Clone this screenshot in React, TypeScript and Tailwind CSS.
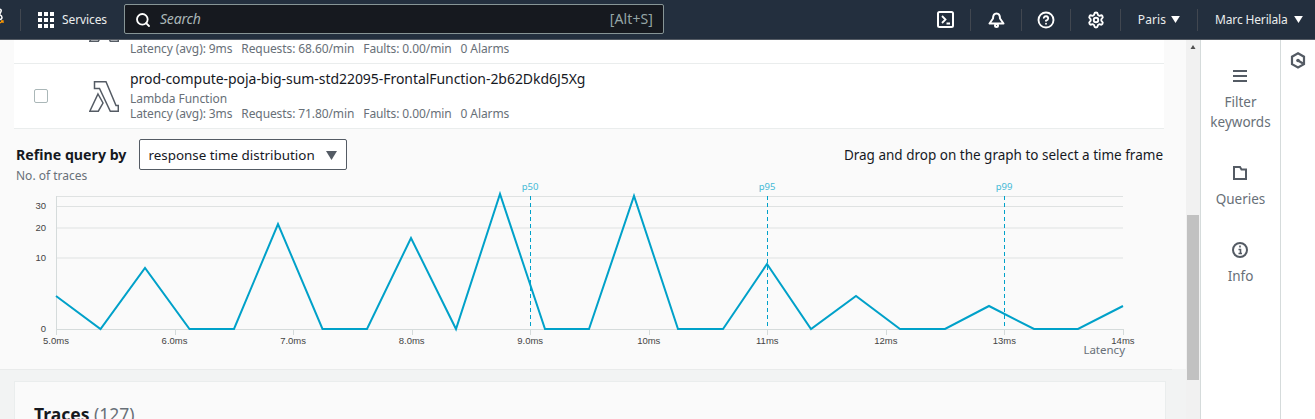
import { CircleHelp, Search, Settings } from "lucide-react";

const points = [
  [56, 296], [100.5, 329], [145, 268], [189.5, 329], [234, 329], [278, 224], [322.5, 329], [367, 329],
  [411, 238], [456, 329], [500, 194], [545, 329], [589, 329], [634, 196], [678, 329], [723, 329],
  [767, 264], [811, 329], [856, 296], [900, 329], [945, 329], [989, 306], [1034, 329], [1078, 329], [1123, 306],
];

const xTicks = ["5.0ms", "6.0ms", "7.0ms", "8.0ms", "9.0ms", "10ms", "11ms", "12ms", "13ms", "14ms"];
const yTicks = [["30", 206], ["20", 228], ["10", 258], ["0", 329]] as const;
const markers = [["p50", 530], ["p95", 767], ["p99", 1004]] as const;

const Caret = ({ className }: { className: string }) => (
  <svg viewBox="0 0 10 8" className={className} fill="currentColor">
    <path d="M0 0h10L5 8z" />
  </svg>
);

const NavIcon = ({ width, children }: { width: string; children: React.ReactNode }) => (
  <div className={`h-[22px] border-r border-[#414750] flex items-center justify-center ${width}`}>{children}</div>
);

const TopBar = () => (
  <header className="h-10 shrink-0 bg-[#232f3e] border-b border-[#545b64] flex items-center text-[#eaeded] text-xs">
    <div className="w-[21px] h-[22px] border-r border-[#414750] relative">
      <svg viewBox="0 0 4 18" className="absolute left-0 top-[-1px] w-1 h-[18px]" fill="none">
        <path d="M-2 1q4 0 3 2.500t-2 3q3 1 3 3t-3 2" stroke="#ffffff" strokeWidth="1.500" />
        <path d="M-2 15q3 0 4-1.500M1 13h2v2" stroke="#f90" strokeWidth="1.300" />
      </svg>
    </div>
    <div className="flex items-center gap-2 ml-[17px] w-[86px]">
      <svg viewBox="0 0 16 16" className="w-4 h-4" fill="white">
        <path d="M0 0h4v4H0zM6 0h4v4H6zM12 0h4v4h-4zM0 6h4v4H0zM6 6h4v4H6zM12 6h4v4h-4zM0 12h4v4H0zM6 12h4v4h-4zM12 12h4v4h-4z" />
      </svg>
      <span className="tracking-[-0.1px]">Services</span>
    </div>
    <div className="w-[540px] h-[30px] -mt-[2px] pt-[2px] bg-[#16191f] border border-[#879596] rounded-[2px] flex items-center pl-[10px] pr-[10px] text-[14px]">
      <Search size={16} strokeWidth={2.75} className="text-white" />
      <span className="ml-[9px] italic text-[#aab7b8] tracking-[-0.2px]">Search</span>
      <span className="ml-auto text-[#95a5a6] tracking-[0.1px]">[Alt+S]</span>
    </div>
    <div className="ml-auto flex items-center">
      <NavIcon width="w-[50px]">
        <svg viewBox="0 0 17 17" className="w-[17px] h-[17px]" fill="none" stroke="white">
          <rect x="1" y="1" width="15" height="15" rx="1.500" strokeWidth="2" />
          <path d="M5 5l3.500 3.500L5 12M9.500 12.500H13" strokeWidth="1.800" />
        </svg>
      </NavIcon>
      <NavIcon width="w-[51px]">
        <svg viewBox="0 0 17 16" className="w-[17px] h-4" fill="none" stroke="white" strokeWidth="2">
          <path d="M1.500 11.500h14L12 6.500c0-2.500-1-5-3.500-5S5 4 5 6.500z" strokeLinejoin="round" />
          <circle cx="8.500" cy="13.500" r="1.500" />
        </svg>
      </NavIcon>
      <NavIcon width="w-[49px]">
        <CircleHelp size={18} strokeWidth={2.5} className="text-white" />
      </NavIcon>
      <NavIcon width="w-[50px]">
        <Settings size={18} strokeWidth={2.5} className="text-white" />
      </NavIcon>
      <NavIcon width="w-[77px]">
        <span className="tracking-[0.1px]">Paris</span>
        <Caret className="w-[9px] h-[7px] ml-[5px] text-white" />
      </NavIcon>
      <div className="w-[117px] pl-[17px] flex items-center">
        <span className="tracking-[-0.15px]">Marc Herilala</span>
        <Caret className="w-[9px] h-[7px] ml-[6px] text-white" />
      </div>
    </div>
  </header>
);

const Stats = ({ stats }: { stats: string[] }) => (
  <div className="flex gap-[9px] text-xs tracking-[-0.1px] text-[#687078]">
    {stats.map((s) => (
      <span key={s}>{s}</span>
    ))}
  </div>
);

const LambdaIcon = () => (
  <svg viewBox="0 0 30 31" className="w-[30px] h-[31px]" fill="none" stroke="#545b64" strokeWidth="1.500">
    <path d="M5.500 .8H17L27 24.500h2.300v5.700h-8L10.500 7.500h-5zM9 13l5 9-4.700 8.200H.8z" />
  </svg>
);

const Chart = () => (
  <svg width="1172" height="187" viewBox="0 182 1172 187" className="block overflow-visible">
    {[196.5, 206.5, 228, 258].map((y) => (
      <line key={y} x1="56" x2="1123" y1={y} y2={y} stroke="#dfe2e2" strokeWidth="1" />
    ))}
    <line x1="56.500" x2="56.500" y1="196" y2="329" stroke="#d5dbdb" />
    <line x1="56" x2="1123" y1="329.500" y2="329.500" stroke="#d5dbdb" />
    {xTicks.map((t, i) => {
      const x = 56 + i * 118.55;
      return (
        <g key={t}>
          <line x1={Math.round(x) + 0.5} x2={Math.round(x) + 0.5} y1="329" y2="335" stroke="#d5dbdb" />
          <text x={x} y="344" textAnchor="middle" fontSize="9.500" fill="#444" fontFamily="Liberation Sans">
            {t}
          </text>
        </g>
      );
    })}
    {yTicks.map(([t, y]) => (
      <text key={t} x="46" y={y + 3} textAnchor="end" fontSize="9.500" fill="#444" fontFamily="Liberation Sans">
        {t}
      </text>
    ))}
    {markers.map(([t, x]) => (
      <g key={t}>
        <line x1={x + 0.5} x2={x + 0.5} y1="196" y2="329" stroke="#00a1c9" strokeDasharray="4 3" />
        <text x={x} y="190" textAnchor="middle" fontSize="9.500" fill="#44b9d6" fontFamily="Noto Sans">
          {t}
        </text>
      </g>
    ))}
    <polyline points={points.map((p) => p.join(",")).join(" ")} fill="none" stroke="#00a1c9" strokeWidth="2" />
    <text x="1125" y="354" textAnchor="end" fontSize="11.500" fill="#687078" fontFamily="Noto Sans">
      Latency
    </text>
  </svg>
);

const SideItem = ({ icon, label, gap }: { icon: React.ReactNode; label: React.ReactNode; gap: string }) => (
  <div className="flex flex-col items-center text-[#687078] text-[13.500px] leading-5 text-center">
    {icon}
    <div className={gap}>{label}</div>
  </div>
);

export default function App() {
  return (
    <div className="w-[1315px] h-[419px] overflow-hidden flex flex-col font-['Noto_Sans',sans-serif] bg-white">
      <TopBar />
      <div className="flex flex-1 min-h-0">
        <main className="w-[1186px] shrink-0 bg-[#f2f3f3] overflow-hidden relative">
          <div className="h-[329px] bg-[#fafafa]">
            <div className="ml-[14px] w-[1150px] bg-white">
              <div className="h-6 pl-[116px] border-b border-[#eaeded] overflow-hidden relative flex items-end pb-[6px]">
                <div className="absolute left-[75px] top-[-29px]">
                  <LambdaIcon />
                </div>
                <Stats stats={["Latency (avg): 9ms", "Requests: 68.60/min", "Faults: 0.00/min", "0 Alarms"]} />
              </div>
              <div className="h-[65px] border-b border-[#eaeded] flex items-center">
                <div className="w-[14px] h-[14px] ml-[20px] border border-[#aab7b8] rounded-[2px] bg-white" />
                <div className="ml-[41px] w-[41px]">
                  <LambdaIcon />
                </div>
                <div className="-mt-px">
                  <div className="text-[14px] leading-[19px] tracking-[-0.05px] text-[#16191f]">
                    prod-compute-poja-big-sum-std22095-FrontalFunction-2b62Dkd6J5Xg
                  </div>
                  <div className="text-xs text-[#687078] mt-[3px] -mb-px leading-4 tracking-[-0.05px]">Lambda Function</div>
                  <Stats stats={["Latency (avg): 3ms", "Requests: 71.80/min", "Faults: 0.00/min", "0 Alarms"]} />
                </div>
              </div>
            </div>
            <div className="flex items-center h-[41px] pl-4 pr-[23px] pt-[10px]">
              <span className="font-bold text-[14.200px] text-[#16191f]">Refine query by</span>
              <div className="ml-[13px] w-[208px] h-[31px] pt-px border border-[#545b64] rounded-[2px] bg-white flex items-center pl-2 text-[13.400px] text-[#16191f]">
                response time distribution
                <Caret className="w-[11px] h-[9px] ml-[11px] text-[#545b64]" />
              </div>
              <span className="ml-auto pt-px text-[13.500px] text-[#16191f]">Drag and drop on the graph to select a time frame</span>
            </div>
            <div className="pl-4 text-xs leading-3 text-[#687078]">No. of traces</div>
            <Chart />
          </div>
          <div className="w-[1172px] h-px bg-[#e9ebeb]" />
          <section className="absolute left-[14px] top-[341px] w-[1152px] h-[60px] bg-[#fafafa] border border-[#eaeded] pl-[19px] pt-5 text-[17.500px] leading-6 font-bold text-[#16191f]">
            Traces <span className="font-normal text-[#687078]">(127)</span>
          </section>
        </main>
        <div className="w-[14px] shrink-0 bg-[#f1f1f1] flex flex-col items-center pt-[5px] relative">
          <Caret className="w-[8px] h-[4px] text-[#505050] rotate-180" />
          <div className="absolute left-[1px] top-[175px] w-[12px] h-[165px] bg-[#c1c1c1]" />
        </div>
        <aside className="w-[81px] shrink-0 border-l border-r border-[#d5dbdb] flex flex-col items-center pt-[29px] gap-[34px]">
          <SideItem
            gap="mt-[9px]"
            icon={
              <svg viewBox="0 0 14 14" className="w-[14px] h-[14px]" stroke="#545b64" strokeWidth="2">
                <path d="M0 2h14M0 7h14M0 12h14" />
              </svg>
            }
            label={<>Filter<br />keywords</>}
          />
          <SideItem
            gap="mt-[9px]"
            icon={
              <svg viewBox="0 0 14 14" className="w-[14px] h-[14px]" fill="none" stroke="#545b64" strokeWidth="2">
                <path d="M1 1h6l1.500 2.500H13V13H1z" />
              </svg>
            }
            label="Queries"
          />
          <SideItem
            gap="mt-[8px]"
            icon={
              <svg viewBox="0 0 16 16" className="w-4 h-4 -mt-px" fill="none" stroke="#545b64" strokeWidth="2">
                <circle cx="8" cy="8" r="7" />
                <path d="M8 3.500v2M6.500 7.500H8.500V11.500M6.500 11.500h3.500" strokeWidth="1.600" />
              </svg>
            }
            label="Info"
          />
        </aside>
        <div className="flex-1 flex justify-center pt-[12px]">
          <svg viewBox="0 0 16 17" className="w-4 h-[17px]" fill="none" stroke="#545b64" strokeWidth="2.200">
            <path d="M8 1.300l6 3.400v7.400l-6 3.400-6-3.400V4.700z" />
            <circle cx="8" cy="8.500" r="1.800" fill="#545b64" strokeWidth="0" />
            <path d="M8 8.500l5 3" />
          </svg>
        </div>
      </div>
    </div>
  );
}
